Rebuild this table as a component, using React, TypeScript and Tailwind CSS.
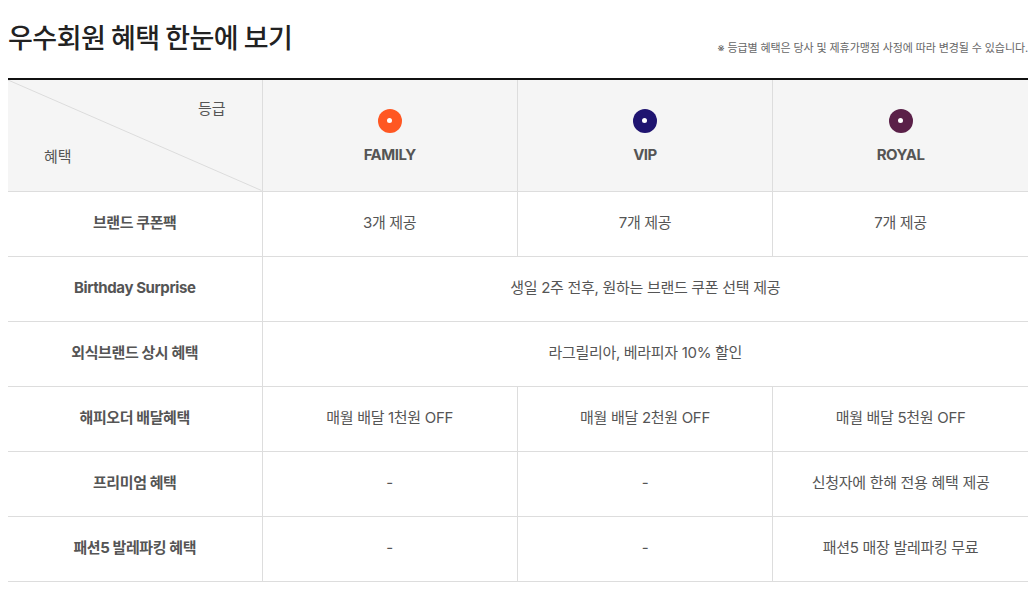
const grades = [
  { name: 'FAMILY', color: 'bg-[#ff5722]' },
  { name: 'VIP', color: 'bg-[#1f1470]' },
  { name: 'ROYAL', color: 'bg-[#5a2048]' },
];

type Row = { label: string; cells: string[] };

const rows: Row[] = [
  { label: '브랜드 쿠폰팩', cells: ['3개 제공', '7개 제공', '7개 제공'] },
  { label: 'Birthday Surprise', cells: ['생일 2주 전후, 원하는 브랜드 쿠폰 선택 제공'] },
  { label: '외식브랜드 상시 혜택', cells: ['라그릴리아, 베라피자 10% 할인'] },
  { label: '해피오더 배달혜택', cells: ['매월 배달 1천원 OFF', '매월 배달 2천원 OFF', '매월 배달 5천원 OFF'] },
  { label: '프리미엄 혜택', cells: ['-', '-', '신청자에 한해 전용 혜택 제공'] },
  { label: '패션5 발레파킹 혜택', cells: ['-', '-', '패션5 매장 발레파킹 무료'] },
];

export default function App() {
  return (
    <div className="bg-white w-[1032px] h-[592px] pl-2 pr-1 font-['Inter','Noto_Sans_CJK_KR',sans-serif]">
      <div className="flex items-end justify-between pt-[18px] pb-[22px]">
        <h2 className="text-[27px] leading-[38px] font-medium text-[#222] tracking-[-0.5px] font-['Noto_Sans_CJK_KR',sans-serif]">우수회원 혜택 한눈에 보기</h2>
        <p className="text-[11px] text-[#666] tracking-[-0.1px]">※ 등급별 혜택은 당사 및 제휴가맹점 사정에 따라 변경될 수 있습니다.</p>
      </div>
      <table className="w-full border-collapse table-fixed border-t-2 border-t-[#111]">
        <colgroup>
          <col className="w-[254px]" />
          <col />
          <col />
          <col />
        </colgroup>
        <thead>
          <tr className="h-[112px] bg-[#f5f5f5]">
            <th className="relative border-b border-r border-[#ddd] p-0 font-normal">
              <svg className="absolute inset-0 w-full h-full" preserveAspectRatio="none" viewBox="0 0 100 100">
                <line x1="0" y1="0" x2="100" y2="100" stroke="#dcdcdc" strokeWidth="1" vectorEffect="non-scaling-stroke" />
              </svg>
              <span className="absolute right-[36px] top-[18px] text-[15px] text-[#555]">등급</span>
              <span className="absolute left-[36px] top-[66px] text-[15px] text-[#555]">혜택</span>
            </th>
            {grades.map((g, i) => (
              <th key={g.name} className={`p-0 border-b border-[#ddd] ${i < 2 ? 'border-r' : ''}`}>
                <div className="flex flex-col items-center pt-[4px]">
                  <div className={`w-[24px] h-[24px] rounded-full ${g.color} flex items-center justify-center`}>
                    <div className="w-[5px] h-[5px] rounded-full bg-white" />
                  </div>
                  <span className="mt-[11px] text-[15px] font-bold text-[#555] tracking-[-0.5px]">{g.name}</span>
                </div>
              </th>
            ))}
          </tr>
        </thead>
        <tbody>
          {rows.map((r) => (
            <tr key={r.label} className="h-[65px]">
              <td className="border-b border-r border-[#ddd] text-center text-[15px] font-bold text-[#555] tracking-[-0.4px]">{r.label}</td>
              {r.cells.length === 1 ? (
                <td colSpan={3} className="border-b border-[#ddd] text-center text-[15px] text-[#555] tracking-[-0.3px]">{r.cells[0]}</td>
              ) : (
                r.cells.map((c, i) => (
                  <td key={i} className={`border-b border-[#ddd] text-center text-[15px] text-[#555] tracking-[-0.3px] ${i < 2 ? 'border-r' : ''}`}>{c}</td>
                ))
              )}
            </tr>
          ))}
        </tbody>
      </table>
    </div>
  );
}
